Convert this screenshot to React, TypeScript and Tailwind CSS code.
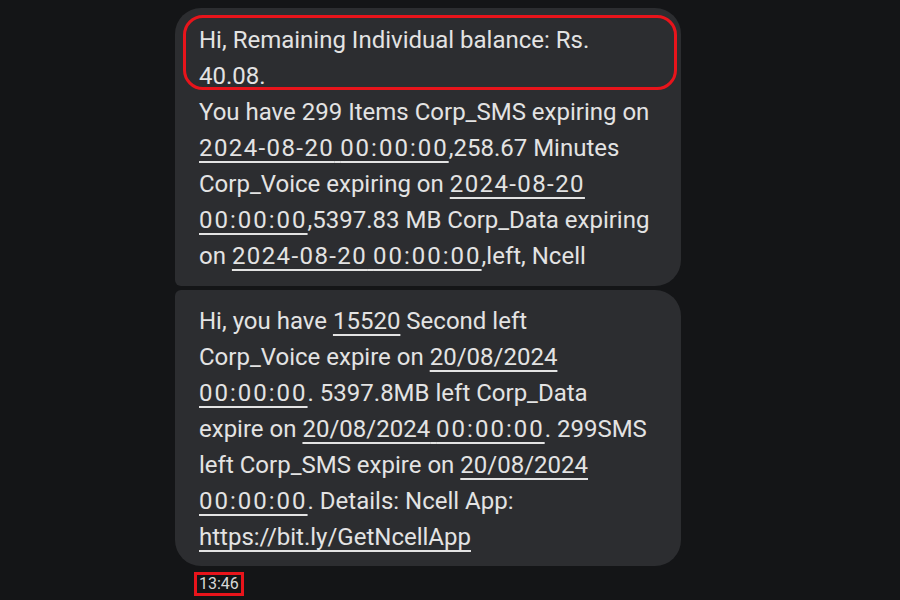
import React from "react";

const link = "underline decoration-2 underline-offset-[5px]";

// the phone font sets dates and times a little wider than Roboto
function Stamp({ text }: { text: string }) {
  const parts = text.split(" ");
  return (
    <span className={link}>
      {parts.map((p, i) => (
        <React.Fragment key={i}>
          {i > 0 && " "}
          <span
            className={
              p.includes(":") ? "tracking-[2px]" : p.includes("-") ? "tracking-[1.4px]" : ""
            }
          >
            {p}
          </span>
        </React.Fragment>
      ))}
    </span>
  );
}

export default function App() {
  return (
    <div
      className="w-[900px] h-[600px] bg-[#141517] overflow-hidden pl-[175px] pt-[8px] text-[#e3e3e3]"
      style={{ fontFamily: "Roboto, 'Noto Sans', sans-serif" }}
    >
      <div className="w-[506px] flex flex-col gap-[4px] text-[24px] leading-[36px]">
        {/* first message */}
        <div className="relative bg-[#2c2d30] rounded-[26px] rounded-bl-[6px] pl-[24px] pt-[14px] pb-[12px]">
          <div className="absolute left-[8px] right-[4px] top-[7px] h-[75px] border-[3px] border-[#e8141b] rounded-[20px]" />
          <div>Hi, Remaining Individual balance: Rs.</div>
          <div>40.08.</div>
          <div>You have 299 Items Corp_SMS expiring on</div>
          <div>
            <Stamp text="2024-08-20 00:00:00" />,258.67 Minutes
          </div>
          <div>
            Corp_Voice expiring on <Stamp text="2024-08-20" />
          </div>
          <div>
            <Stamp text="00:00:00" />,5397.83 MB Corp_Data expiring
          </div>
          <div>
            on <Stamp text="2024-08-20 00:00:00" />,left, Ncell
          </div>
        </div>

        {/* second message */}
        <div className="bg-[#2c2d30] rounded-[26px] rounded-tl-[6px] pl-[24px] pt-[13px] pb-[11px]">
          <div>
            Hi, you have <span className={link}>15520</span> Second left
          </div>
          <div>
            Corp_Voice expire on <span className={link}>20/08/2024</span>
          </div>
          <div>
            <Stamp text="00:00:00" />. 5397.8MB left Corp_Data
          </div>
          <div>
            expire on <Stamp text="20/08/2024 00:00:00" />. 299SMS
          </div>
          <div>
            left Corp_SMS expire on <span className={link}>20/08/2024</span>
          </div>
          <div>
            <Stamp text="00:00:00" />. Details: Ncell App:
          </div>
          <div>
            <span className={link}>https://bit.ly/GetNcellApp</span>
          </div>
        </div>
      </div>

      {/* timestamp */}
      <div className="mt-[6px] ml-[19px] inline-block border-[3px] border-[#e8141b] px-[2px] text-[16px] leading-[18px] text-[#d8d8d8]">
        13:46
      </div>
    </div>
  );
}
